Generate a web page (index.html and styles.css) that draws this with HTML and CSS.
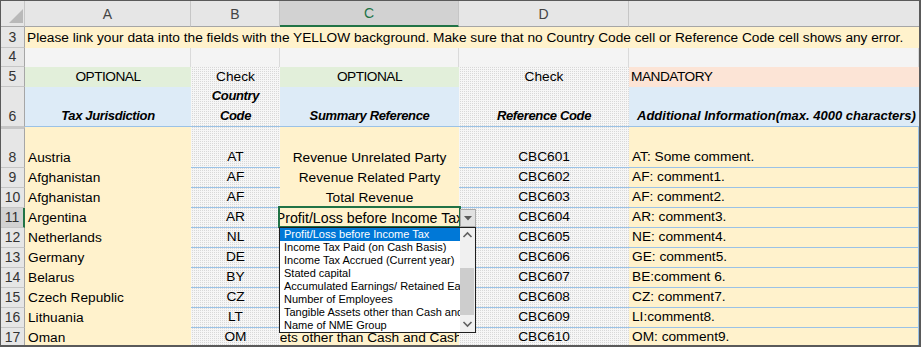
FILE: index.html
```html
<!DOCTYPE html>
<html lang="en">
<head>
  <meta charset="UTF-8" />
  <title>CbC Table 3</title>
  <link rel="stylesheet" href="styles.css">
</head>
<body>
  <div class="sheet">
    <div class="grid">
      <!-- column headers -->
      <div class="cell colhead corner">
        <svg width="24" height="26" viewBox="0 0 24 26"><polygon points="8,22 22,22 22,8" fill="#b9b9b9" /></svg>
      </div>
      <div class="cell colhead">A</div>
      <div class="cell colhead">B</div>
      <div class="cell colhead colhead--sel">C</div>
      <div class="cell colhead">D</div>
      <div class="cell colhead colhead--last"></div>

      <!-- row 3 -->
      <div class="cell rowhead">3</div>
      <div class="cell note">Please link your data into the fields with the YELLOW background. Make sure that no Country Code cell or Reference Code cell shows any error.</div>

      <!-- row 4 -->
      <div class="cell rowhead">4</div>
      <div class="cell blank"></div>
      <div class="cell blank"></div>
      <div class="cell blank"></div>
      <div class="cell blank"></div>
      <div class="cell blank"></div>

      <!-- row 5 -->
      <div class="cell rowhead">5</div>
      <div class="cell opt">OPTIONAL</div>
      <div class="cell dots">Check</div>
      <div class="cell opt">OPTIONAL</div>
      <div class="cell dots">Check</div>
      <div class="cell mand left">MANDATORY</div>

      <!-- row 6 -->
      <div class="cell rowhead">6</div>
      <div class="cell head">Tax Jurisdiction</div>
      <div class="cell head head--dots head--wrap"><span>Country</span><span>Code</span></div>
      <div class="cell head">Summary Reference</div>
      <div class="cell head head--dots">Reference Code</div>
      <div class="cell head head--e">Additional Information(max. 4000 characters)</div>

      <!-- data rows -->
      <div class="cell rowhead rowhead--gap">8</div>
      <div class="cell yel left">Austria</div>
      <div class="cell dots line">AT</div>
      <div class="cell yel">Revenue Unrelated Party</div>
      <div class="cell dots line">CBC601</div>
      <div class="cell yel line left">AT: Some comment.</div>

      <div class="cell rowhead">9</div>
      <div class="cell yel left">Afghanistan</div>
      <div class="cell dots line">AF</div>
      <div class="cell yel">Revenue Related Party</div>
      <div class="cell dots line">CBC602</div>
      <div class="cell yel line left">AF: comment1.</div>

      <div class="cell rowhead">10</div>
      <div class="cell yel left">Afghanistan</div>
      <div class="cell dots line">AF</div>
      <div class="cell yel">Total Revenue</div>
      <div class="cell dots line">CBC603</div>
      <div class="cell yel line left">AF: comment2.</div>

      <div class="cell rowhead rowhead--sel">11</div>
      <div class="cell yel left">Argentina</div>
      <div class="cell dots line">AR</div>
      <div class="cell yel active">Profit/Loss before Income Tax</div>
      <div class="cell dots line">CBC604</div>
      <div class="cell yel line left">AR: comment3.</div>

      <div class="cell rowhead">12</div>
      <div class="cell yel left">Netherlands</div>
      <div class="cell dots line">NL</div>
      <div class="cell yel"></div>
      <div class="cell dots line">CBC605</div>
      <div class="cell yel line left">NE: comment4.</div>

      <div class="cell rowhead">13</div>
      <div class="cell yel left">Germany</div>
      <div class="cell dots line">DE</div>
      <div class="cell yel"></div>
      <div class="cell dots line">CBC606</div>
      <div class="cell yel line left">GE: comment5.</div>

      <div class="cell rowhead">14</div>
      <div class="cell yel left">Belarus</div>
      <div class="cell dots line">BY</div>
      <div class="cell yel"></div>
      <div class="cell dots line">CBC607</div>
      <div class="cell yel line left">BE:comment 6.</div>

      <div class="cell rowhead">15</div>
      <div class="cell yel left">Czech Republic</div>
      <div class="cell dots line">CZ</div>
      <div class="cell yel"></div>
      <div class="cell dots line">CBC608</div>
      <div class="cell yel line left">CZ: comment7.</div>

      <div class="cell rowhead">16</div>
      <div class="cell yel left">Lithuania</div>
      <div class="cell dots line">LT</div>
      <div class="cell yel"></div>
      <div class="cell dots line">CBC609</div>
      <div class="cell yel line left">LI:comment8.</div>

      <div class="cell rowhead">17</div>
      <div class="cell yel left">Oman</div>
      <div class="cell dots line">OM</div>
      <div class="cell yel">Tangible Assets other than Cash and Cash Equivalents</div>
      <div class="cell dots line">CBC610</div>
      <div class="cell yel line left">OM: comment9.</div>
    </div>

    <!-- active cell + validation list -->
    <div class="selbox"></div>
    <div class="ddbtn">
      <svg width="8" height="5" viewBox="0 0 8 5"><polygon points="0,0 8,0 4,4.5" fill="#5a5a5a" /></svg>
    </div>
    <div class="dd">
      <div class="dd-list">
        <div class="dd-item dd-item--on">Profit/Loss before Income Tax</div>
        <div class="dd-item">Income Tax Paid (on Cash Basis)</div>
        <div class="dd-item">Income Tax Accrued (Current year)</div>
        <div class="dd-item">Stated capital</div>
        <div class="dd-item">Accumulated Earnings/ Retained Earnings</div>
        <div class="dd-item">Number of Employees</div>
        <div class="dd-item">Tangible Assets other than Cash and Cash Equivalents</div>
        <div class="dd-item">Name of NME Group</div>
      </div>
      <div class="dd-bar">
        <div class="dd-arrow">
          <svg width="15" height="15" viewBox="0 0 15 15"><polyline points="3.5,9 7.5,5 11.5,9" fill="none" stroke="#606060" stroke-width="1.6" /></svg>
        </div>
        <div class="dd-track"><div class="dd-thumb"></div></div>
        <div class="dd-arrow">
          <svg width="15" height="15" viewBox="0 0 15 15"><polyline points="3.5,5 7.5,9 11.5,5" fill="none" stroke="#606060" stroke-width="1.6" /></svg>
        </div>
      </div>
    </div>
  </div>
</body>
</html>
```

FILE: styles.css
```css
:root {
  --yellow: #fff2cc;
  --green: #e2efda;
  --blue: #ddebf7;
  --salmon: #fce4d6;
  --line-blue: #9bc2e6;
  --head-bg: #e6e6e6;
  --head-sel: #d2d2d2;
  --excel-green: #217346;
}
body {
  margin: 0;
  background: #fff;
}
.sheet {
  position: relative;
  width: 921px;
  height: 347px;
  box-sizing: border-box;
  border: 1px solid #5a5a5a;
  border-right-width: 2px;
  border-bottom-width: 2px;
  overflow: hidden;
  font-family: "Liberation Sans", Arial, sans-serif;
  font-size: 13.7px;
  color: #000;
}
.grid {
  display: grid;
  grid-template-columns: 24px 166px 89px 179px 170px 290px;
  grid-template-rows: 26px 21px 19px 20px 40px 41px repeat(10, 20px);
}
.cell {
  box-sizing: border-box;
  display: flex;
  align-items: flex-end;
  justify-content: center;
  padding: 0 3px 2px;
  line-height: 16px;
  white-space: nowrap;
  overflow: hidden;
}
.left {
  justify-content: flex-start;
}

/* headers */
.colhead {
  align-items: center;
  padding: 0;
  background: var(--head-bg);
  border-right: 1px solid #c6c6c6;
  border-bottom: 1px solid #a6a6a6;
  color: #444;
  font-size: 14px;
}
.colhead--sel {
  background: var(--head-sel);
  color: var(--excel-green);
  border-bottom: 2px solid var(--excel-green);
}
.colhead--last {
  border-right: none;
}
.corner {
  display: block;
}
.corner svg {
  display: block;
}
.rowhead {
  padding: 0 0 2px;
  background: var(--head-bg);
  border-right: 1px solid #a6a6a6;
  border-bottom: 1px solid #c6c6c6;
  color: #333;
  font-size: 14px;
}
.rowhead--gap {
  border-top: 2px solid #c6c6c6;
}
.rowhead--sel {
  background: var(--head-sel);
  border-right: 2px solid var(--excel-green);
}

/* sheet body */
.note {
  grid-column: span 5;
  justify-content: flex-start;
  padding-left: 2px;
  background: var(--yellow);
}
.blank {
  background: #f4f4f4;
  border-right: 1px solid #dadada;
}
.opt {
  background: var(--green);
  letter-spacing: -0.5px;
}
.mand {
  background: var(--salmon);
  padding-left: 2px;
  letter-spacing: -0.5px;
}
.dots {
  background: repeating-conic-gradient(#d8d8d8 0 25%, #f6f6f6 0 100%) 0 0 / 2px 2px;
}
.head {
  background: var(--blue);
  font-size: 13px;
  font-weight: bold;
  font-style: italic;
  letter-spacing: -0.35px;
  border-bottom: 1px solid var(--line-blue);
}
.head--dots {
  background: repeating-conic-gradient(#d8d8d8 0 25%, #f6f6f6 0 100%) 0 0 / 2px 2px;
}
.head--wrap {
  flex-direction: column;
  justify-content: flex-end;
  align-items: center;
  line-height: 20px;
  padding-bottom: 0;
}
.head--e {
  justify-content: flex-start;
  padding-left: 8px;
  letter-spacing: 0;
}
.yel {
  background: var(--yellow);
}
.active {
  font-size: 14.2px;
}
.line {
  border-bottom: 1px solid var(--line-blue);
}
.grid > .yel.left:nth-child(6n + 2) {
  border-right: 1px solid var(--line-blue);
}

/* active cell with list */
.selbox {
  position: absolute;
  left: 277px;
  top: 205px;
  width: 183px;
  height: 22px;
  box-sizing: border-box;
  border: 2px solid var(--excel-green);
}
.ddbtn {
  position: absolute;
  left: 459px;
  top: 208px;
  width: 16px;
  height: 18px;
  box-sizing: border-box;
  border: 1px solid #ababab;
  background: #e1e1e1;
  display: flex;
  align-items: center;
  justify-content: center;
}
.dd {
  position: absolute;
  left: 278px;
  top: 226px;
  width: 197px;
  height: 106px;
  box-sizing: border-box;
  border: 1px solid #1e1e1e;
  background: #fff;
  display: flex;
  font-family: "Liberation Sans", Arial, sans-serif;
  font-size: 11px;
}
.dd-list {
  width: 180px;
  overflow: hidden;
}
.dd-item {
  height: 13px;
  line-height: 13px;
  padding-left: 4px;
  white-space: nowrap;
  overflow: hidden;
}
.dd-item--on {
  background: #0078d7;
  color: #fff;
}
.dd-bar {
  width: 15px;
  display: flex;
  flex-direction: column;
  background: #f0f0f0;
}
.dd-arrow {
  height: 15px;
}
.dd-arrow svg {
  display: block;
}
.dd-track {
  flex: 1;
}
.dd-thumb {
  margin: 25px 1px 0 0;
  height: 47px;
  background: #cdcdcd;
}
```
